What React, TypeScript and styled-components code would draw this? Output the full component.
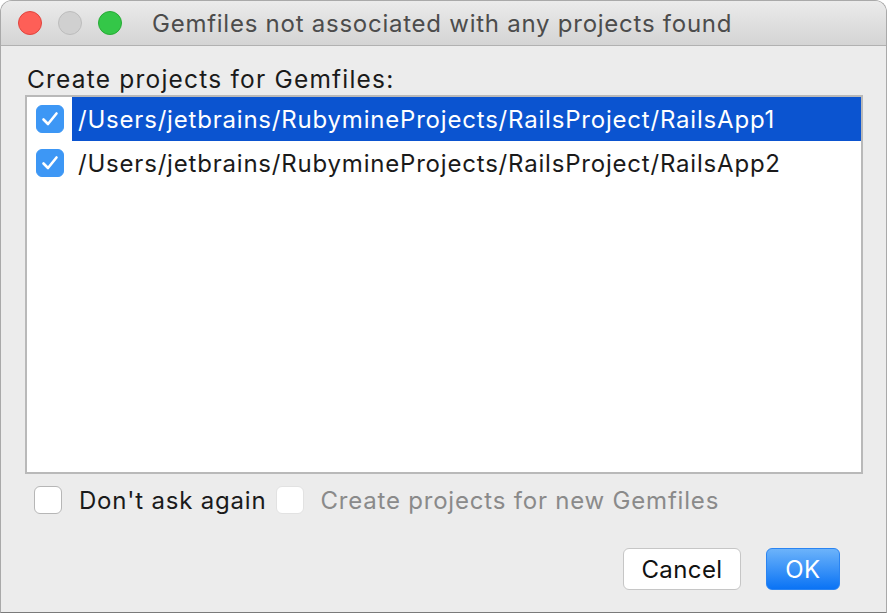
import React from "react";
import styled, { createGlobalStyle } from "styled-components";

const Global = createGlobalStyle`
  html, body { margin: 0; padding: 0; background: #ffffff; }
  body { font-family: Inter, "Noto Sans", sans-serif; }
  #root { width: 888px; height: 614px; }
`;

const Window = styled.div`
  box-sizing: border-box;
  width: 887px;
  height: 613px;
  border: 1px solid #a9a9a9;
  border-bottom-color: #7a7a7a;
  border-radius: 12px 12px 0 0;
  background: #ececec;
  overflow: hidden;
  display: flex;
  flex-direction: column;
`;

const TitleBar = styled.div`
  box-sizing: border-box;
  height: 45px;
  flex: none;
  display: flex;
  align-items: center;
  padding-left: 17px;
  background: linear-gradient(#ebebeb, #d4d4d4);
  border-bottom: 1px solid #b1b1b1;
`;

const Lights = styled.div`
  display: flex;
  gap: 16px;
  margin-right: 30px;
`;

const Light = styled.div<{ $bg: string; $bd: string }>`
  box-sizing: border-box;
  width: 24px;
  height: 24px;
  border-radius: 50%;
  background: ${(p) => p.$bg};
  border: 1px solid ${(p) => p.$bd};
`;

const Title = styled.div`
  font-size: 24px;
  color: #4c4c4c;
  letter-spacing: 0.75px;
`;

const Body = styled.div`
  flex: 1;
  display: flex;
  flex-direction: column;
  padding: 18px 24px 0 24px;
`;

const Label = styled.div`
  font-size: 24.5px;
  letter-spacing: 1.2px;
  color: #1a1a1a;
  height: 31px;
  line-height: 31px;
  padding-left: 2px;
`;

const ListBox = styled.div`
  box-sizing: border-box;
  width: 838px;
  height: 379px;
  border: 2px solid #b9b9b9;
  background: #ffffff;
  display: flex;
  flex-direction: column;
`;

const Row = styled.div`
  height: 44px;
  display: flex;
  align-items: center;
  padding-left: 9px;
`;

const RowText = styled.div<{ $sel?: boolean }>`
  align-self: stretch;
  flex: 1;
  display: flex;
  align-items: center;
  margin-left: 8px;
  padding-left: 6px;
  font-size: 24px;
  letter-spacing: 0.8px;
  color: ${(p) => (p.$sel ? "#ffffff" : "#1a1a1a")};
  background: ${(p) => (p.$sel ? "#0b54d0" : "transparent")};
`;

const CheckBox = styled.div<{ $on?: boolean; $dim?: boolean }>`
  box-sizing: border-box;
  width: 28px;
  height: 28px;
  flex: none;
  border-radius: 6px;
  display: flex;
  align-items: center;
  justify-content: center;
  background: ${(p) => (p.$on ? "#3d97f5" : "#ffffff")};
  border: 1px solid ${(p) => (p.$on ? "#3d97f5" : p.$dim ? "#e2e2e2" : "#b6b6b6")};
`;

const Options = styled.div`
  display: flex;
  align-items: center;
  margin-top: 11px;
  height: 30px;
  padding-left: 9px;
`;

const OptText = styled.div<{ $dim?: boolean }>`
  font-size: 24px;
  letter-spacing: 0.8px;
  color: ${(p) => (p.$dim ? "#8a8a8a" : "#1a1a1a")};
  margin-left: ${(p) => (p.$dim ? "16px" : "17px")};
  margin-right: 10px;
`;

const Buttons = styled.div`
  display: flex;
  justify-content: flex-end;
  gap: 25px;
  margin-top: 33px;
  padding-right: 22px;
`;

const Button = styled.button<{ $primary?: boolean }>`
  box-sizing: border-box;
  height: 42px;
  padding: 0;
  font-family: inherit;
  font-size: 24px;
  letter-spacing: 0.4px;
  border-radius: 6px;
  width: ${(p) => (p.$primary ? "74px" : "118px")};
  color: ${(p) => (p.$primary ? "#ffffff" : "#111111")};
  background: ${(p) => (p.$primary ? "linear-gradient(#6cb3fa, #0a73f5)" : "#ffffff")};
  border: 1px solid ${(p) => (p.$primary ? "#2a84f2" : "#c6c6c6")};
`;

const Check = () => (
  <svg width="18" height="16" viewBox="0 0 18 16">
    <path d="M2.5 8.5 L7 13 L15.5 2.5" fill="none" stroke="#ffffff" strokeWidth="2.6" strokeLinecap="round" strokeLinejoin="round" />
  </svg>
);

const rows = [
  "/Users/jetbrains/RubymineProjects/RailsProject/RailsApp1",
  "/Users/jetbrains/RubymineProjects/RailsProject/RailsApp2",
];

export default function App() {
  return (
    <>
      <Global />
      <Window>
        <TitleBar>
          <Lights>
            <Light $bg="#fe5f57" $bd="#e0443e" />
            <Light $bg="#d0d0d0" $bd="#bcbcbc" />
            <Light $bg="#34c748" $bd="#27aa35" />
          </Lights>
          <Title>Gemfiles not associated with any projects found</Title>
        </TitleBar>
        <Body>
          <Label>Create projects for Gemfiles:</Label>
          <ListBox>
            {rows.map((r, i) => (
              <Row key={r}>
                <CheckBox $on>
                  <Check />
                </CheckBox>
                <RowText $sel={i === 0}>{r}</RowText>
              </Row>
            ))}
          </ListBox>
          <Options>
            <CheckBox />
            <OptText>Don't ask again</OptText>
            <CheckBox $dim />
            <OptText $dim>Create projects for new Gemfiles</OptText>
          </Options>
          <Buttons>
            <Button>Cancel</Button>
            <Button $primary>OK</Button>
          </Buttons>
        </Body>
      </Window>
    </>
  );
}
